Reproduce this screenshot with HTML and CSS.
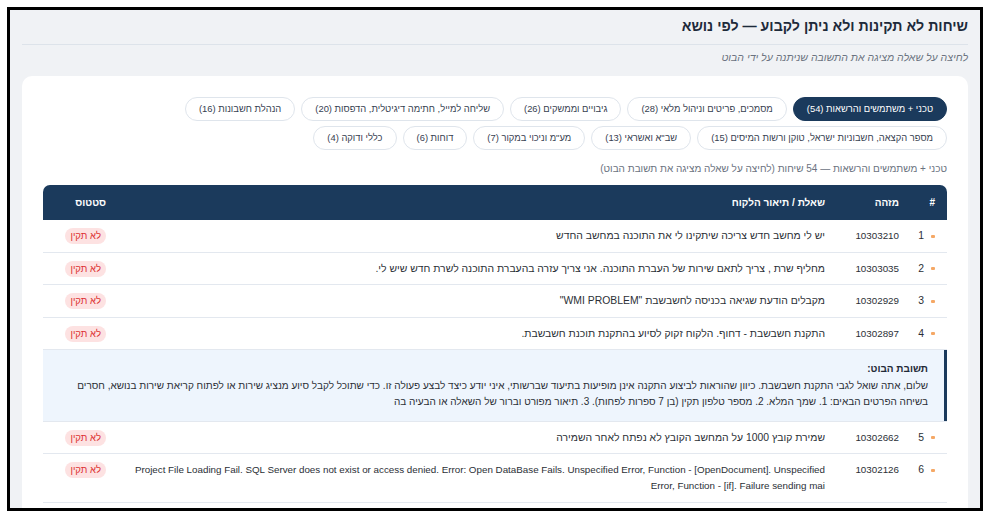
FILE: index.html
```html
<!DOCTYPE html>
<html lang="he" dir="rtl">
<head>
<meta charset="utf-8">
<title>שיחות לא תקינות</title>
<link rel="stylesheet" href="styles.css">
</head>
<body>
<div class="frame">
  <header class="page-head">
    <h1 class="title">שיחות לא תקינות ולא ניתן לקבוע — לפי נושא</h1>
  </header>
  <p class="subtitle">לחיצה על שאלה מציגה את התשובה שניתנה על ידי הבוט</p>
  <section class="card">
    <div class="pills">
      <span class="pill active">טכני + משתמשים והרשאות (54)</span>
      <span class="pill">מסמכים, פריטים וניהול מלאי (28)</span>
      <span class="pill">גיבויים וממשקים (26)</span>
      <span class="pill">שליחה למייל, חתימה דיגיטלית, הדפסות (20)</span>
      <span class="pill">הנהלת חשבונות (16)</span>
      <span class="pill">מספר הקצאה, חשבוניות ישראל, טוקן ורשות המיסים (15)</span>
      <span class="pill">שב"א ואשראי (13)</span>
      <span class="pill">מע"מ וניכוי במקור (7)</span>
      <span class="pill">דוחות (6)</span>
      <span class="pill">כללי ודוקה (4)</span>
    </div>
    <p class="caption">טכני + משתמשים והרשאות — 54 שיחות (לחיצה על שאלה מציגה את תשובת הבוט)</p>
    <div class="table-wrap">
      <table class="grid">
        <colgroup>
          <col class="c-num"><col class="c-id"><col class="c-q"><col class="c-status">
        </colgroup>
        <thead>
          <tr><th>#</th><th>מזהה</th><th>שאלת / תיאור הלקוח</th><th>סטטוס</th></tr>
        </thead>
        <tbody>
          <tr><td class="num"><span class="dot"></span>1</td><td class="id">10303210</td><td>יש לי מחשב חדש צריכה שיתקינו לי את התוכנה במחשב החדש</td><td><span class="badge">לא תקין</span></td></tr>
          <tr><td class="num"><span class="dot"></span>2</td><td class="id">10303035</td><td>מחליף שרת , צריך לתאם שירות של העברת התוכנה. אני צריך עזרה בהעברת התוכנה לשרת חדש שיש לי.</td><td><span class="badge">לא תקין</span></td></tr>
          <tr><td class="num"><span class="dot"></span>3</td><td class="id">10302929</td><td>מקבלים הודעת שגיאה בכניסה לחשבשבת "WMI PROBLEM"</td><td><span class="badge">לא תקין</span></td></tr>
          <tr><td class="num"><span class="dot"></span>4</td><td class="id">10302897</td><td>התקנת חשבשבת - דחוף. הלקוח זקוק לסיוע בהתקנת תוכנת חשבשבת.</td><td><span class="badge">לא תקין</span></td></tr>
          <tr class="answer-row"><td colspan="4"><div class="answer"><strong class="answer-title">תשובת הבוט:</strong><p class="answer-text">שלום, אתה שואל לגבי התקנת חשבשבת. כיוון שהוראות לביצוע התקנה אינן מופיעות בתיעוד שברשותי, איני יודע כיצד לבצע פעולה זו. כדי שתוכל לקבל סיוע מנציג שירות או לפתוח קריאת שירות בנושא, חסרים בשיחה הפרטים הבאים: 1. שמך המלא. 2. מספר טלפון תקין (בן 7 ספרות לפחות). 3. תיאור מפורט וברור של השאלה או הבעיה בה</p></div></td></tr>
          <tr><td class="num"><span class="dot"></span>5</td><td class="id">10302662</td><td>שמירת קובץ 1000 על המחשב הקובץ לא נפתח לאחר השמירה</td><td><span class="badge">לא תקין</span></td></tr>
          <tr><td class="num"><span class="dot"></span>6</td><td class="id">10302126</td><td class="latin">Project File Loading Fail. SQL Server does not exist or access denied. Error: Open DataBase Fails. Unspecified Error, Function - [OpenDocument]. Unspecified Error, Function - [if]. Failure sending mai</td><td><span class="badge">לא תקין</span></td></tr>
        </tbody>
      </table>
    </div>
  </section>
</div>
</body>
</html>
```
FILE: styles.css
```css
* { box-sizing: border-box; }
html, body { margin: 0; padding: 0; background: #ffffff; }
body {
  font-family: "Liberation Sans", "DejaVu Sans", sans-serif;
  color: #2b2f36;
}
.frame {
  margin: 7px;
  height: 504px;
  border: 3px solid #000;
  background: #f0f2f5;
  padding: 0 12px;
  overflow: hidden;
}
.page-head {
  padding: 5px 0 7px;
  border-bottom: 1px solid #dde3ea;
}
.title {
  margin: 0;
  font-size: 14.2px;
  line-height: 22px;
  font-weight: 700;
  color: #1e2a3a;
}
.subtitle {
  margin: 4px 0 0;
  font-size: 10.5px;
  line-height: 16px;
  font-style: italic;
  color: #6b7280;
}
.card {
  margin-top: 11px;
  background: #fff;
  border-radius: 10px 10px 0 0;
  padding: 21px 21px 0;
  height: 440px;
}
.pills {
  display: flex;
  flex-wrap: wrap;
  gap: 5px 6px;
}
.pill {
  display: inline-block;
  border: 1px solid #dfe5ec;
  border-radius: 13px;
  padding: 4px 13px;
  font-size: 9.4px;
  line-height: 14px;
  color: #374151;
  background: #fff;
  white-space: nowrap;
}
.pill.active {
  background: #1b3a5c;
  border-color: #1b3a5c;
  color: #fff;
}
.caption {
  margin: 11px 0 8px;
  font-size: 10px;
  line-height: 16px;
  color: #6b7280;
}
.table-wrap {
  border-radius: 7px 7px 0 0;
  overflow: hidden;
}
.grid {
  width: 100%;
  border-collapse: collapse;
  table-layout: fixed;
}
.c-num { width: 36px; }
.c-id { width: 74px; }
.c-status { width: 75px; }
.grid th {
  background: #1b3a5c;
  color: #fff;
  font-size: 10px;
  line-height: 15px;
  font-weight: 700;
  text-align: right;
  padding: 10px 12px;
}
.grid td {
  font-size: 10.4px;
  line-height: 16px;
  padding: 8px 12px 7.5px;
  text-align: right;
  vertical-align: top;
  border-bottom: 1px solid #e3e8ef;
  color: #2b2f36;
}
.grid td.num {
  white-space: nowrap;
  padding-left: 0;
}
.grid td.id { font-size: 9.8px; }
.grid td.latin { font-size: 9.8px; }
.dot {
  display: inline-block;
  width: 4px;
  height: 3px;
  border-radius: 1px;
  background: #f5a866;
  margin-left: 7px;
  vertical-align: middle;
}
.badge {
  display: inline-block;
  background: #fde2e2;
  color: #dc2f2f;
  font-size: 9.5px;
  line-height: 14px;
  padding: 1px 5px;
  border-radius: 9px;
}
.answer-row td {
  padding: 0;
}
.answer {
  background: #eef5fd;
  border-right: 3px solid #1b3a5c;
  padding: 11px 16px 10px 14px;
  font-size: 10px;
  line-height: 16.5px;
}
.answer-title {
  display: block;
  font-weight: 700;
  color: #1f2937;
}
.answer-text {
  margin: 0;
  color: #2b2f36;
}
```
